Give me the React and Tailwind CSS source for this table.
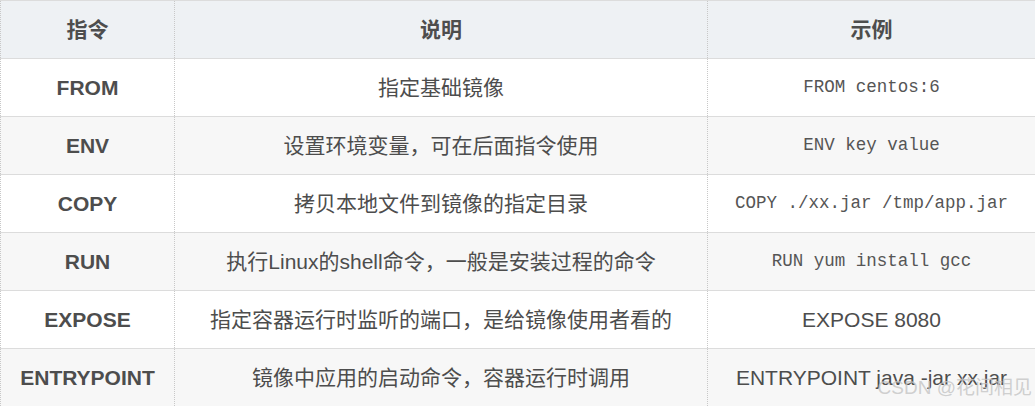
const rows = [
  { cmd: 'FROM', desc: '指定基础镜像', ex: 'FROM centos:6', mono: true },
  { cmd: 'ENV', desc: '设置环境变量，可在后面指令使用', ex: 'ENV key value', mono: true },
  { cmd: 'COPY', desc: '拷贝本地文件到镜像的指定目录', ex: 'COPY ./xx.jar /tmp/app.jar', mono: true },
  { cmd: 'RUN', desc: '执行Linux的shell命令，一般是安装过程的命令', ex: 'RUN yum install gcc', mono: true },
  { cmd: 'EXPOSE', desc: '指定容器运行时监听的端口，是给镜像使用者看的', ex: 'EXPOSE 8080' },
  { cmd: 'ENTRYPOINT', desc: '镜像中应用的启动命令，容器运行时调用', ex: 'ENTRYPOINT java -jar xx.jar' },
]

const sans = "font-['Liberation_Sans','Noto_Sans_CJK_SC',sans-serif]"
const cell = 'flex items-center justify-center border-l border-dotted border-[#c8c8c8]'

export default function App() {
  return (
    <div className={`relative h-[406px] w-[1035px] overflow-hidden bg-white text-[21px] text-[#4d4d4d] ${sans}`}>
      <div className="grid h-[59px] grid-cols-[174px_533px_1fr] border-y border-[#dcdcdc] bg-[#eef1f4] font-bold">
        <div className={cell}>指令</div>
        <div className={cell}>说明</div>
        <div className={cell}>示例</div>
      </div>

      {rows.map((r, i) => (
        <div
          key={r.cmd}
          className={`grid h-[58px] grid-cols-[174px_533px_1fr] border-b border-[#dcdcdc] ${i % 2 ? 'bg-[#f7f7f7]' : 'bg-white'}`}
        >
          <div className={`${cell} font-bold`}>{r.cmd}</div>
          <div className={cell}>{r.desc}</div>
          <div className={cell}>
            {r.mono ? (
              <span className="font-['Liberation_Mono',monospace] text-[17.5px] text-[#555]">{r.ex}</span>
            ) : (
              r.ex
            )}
          </div>
        </div>
      ))}

      <span className="absolute bottom-[4px] right-[3px] text-[19px] text-[#c4c4c4]/80">CSDN @花间相见</span>
    </div>
  )
}
